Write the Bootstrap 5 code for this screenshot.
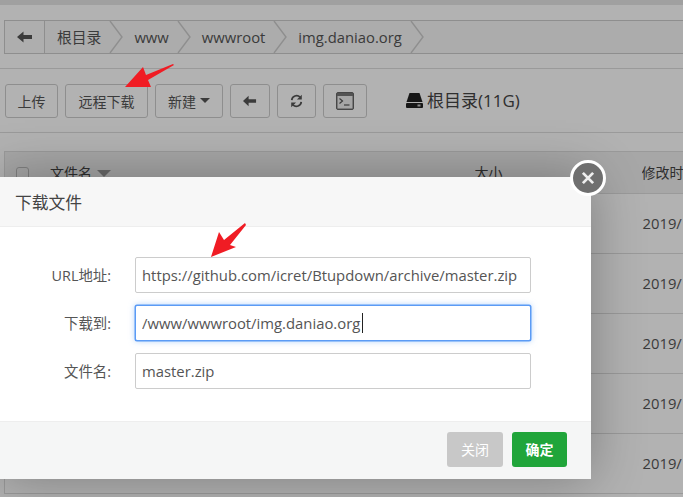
<!DOCTYPE html>
<html lang="zh">
<head>
<meta charset="utf-8">
<title>下载文件</title>
<link href="https://cdn.jsdelivr.net/npm/bootstrap@5.3.0/dist/css/bootstrap.min.css" rel="stylesheet">
<script src="https://cdn.jsdelivr.net/npm/bootstrap@5.3.0/dist/js/bootstrap.bundle.min.js"></script>
<style>
html,body{height:497px;overflow:hidden;}
body{background:#fff;font-family:"Open Sans","Noto Sans CJK SC",sans-serif;font-size:14px;color:#555;width:683px;position:relative;}
.topstrip{height:5px;background:#e6e6e6;}
.crumbbar{margin:15px 0 0 4px;height:34px;border:1px solid #ccc;border-right:0;background:#f6f6f6;}
.crumb-back{width:40px;border-right:1px solid #ccc;background:#fafafa;}
.crumb-text{color:#555;font-size:14.8px;line-height:32px;padding:0 8px 0 11px;white-space:nowrap;}
.crumb-first{padding-left:12px;}
.crumb-chev{width:14px;height:32px;flex:none;}
.toolrow{margin-top:14px;border-top:1px solid #ddd;padding:15px 0 15px 5px;height:65px;border-bottom:1px solid #ddd;gap:7px;}
.tool-btn{height:34px;padding:0 12px 0 12px;border:1px solid #ccc;border-radius:3px;background:#fff;color:#555;font-size:14px;display:flex;align-items:center;justify-content:center;white-space:nowrap;}
.tool-btn span.lbl{position:relative;top:1px;}
.w-up{width:53px}.w-rd{width:83px}.w-new{width:68px}.w-ic{width:40px}.w-ic2{width:39px}.w-tm{width:44px}
.caret-d{width:0;height:0;border:5px solid transparent;border-top-color:#555;border-bottom:0;margin-left:4px;}
.disk{margin-left:32px;font-size:17px;color:#444;gap:4px;}
.filetable{margin:18px 0 0 4px;width:679px;border-collapse:collapse;table-layout:fixed;border-top:1px solid #ddd;border-left:1px solid #ddd;}
.filetable th{font-weight:400;height:42px;border-bottom:1px solid #ddd;padding:0;color:#444;white-space:nowrap;overflow:hidden;background:#f0f0f0;}
.filetable td{height:60px;border-bottom:1px solid #ddd;padding:0;color:#555;font-size:14.8px;}
.filetable td.date-cell{padding-left:1px;}
.chk-box{width:13px;height:13px;border:1px solid #bbb;border-radius:3px;display:inline-block;margin:0 21px 0 11px;vertical-align:-2px;}
.sort-tri{width:0;height:0;border:7px solid transparent;border-top-color:#999;border-bottom:0;display:inline-block;margin-left:5px;vertical-align:1px;}
.row-link{margin-left:50px;display:inline-block;width:31px;height:31px;border-bottom:1px solid #20a;position:relative;top:-1px;}
.shade{position:absolute;inset:0;background:rgba(0,0,0,.3);}
.dlg{position:absolute;left:0;top:177px;width:591px;height:302px;background:#fff;display:flex;flex-direction:column;box-shadow:0 0 50px rgba(0,0,0,.3);}
.dlg-head{height:50px;background:#f7f7f7;border-bottom:1px solid #eee;padding:0 15px;line-height:51px;font-size:16.8px;color:#444;}
.dlg-body{flex:1;padding-top:30px;}
.dlg-row{height:36px;margin-bottom:12px;}
.dlg-label{width:111px;text-align:right;color:#555;font-size:14.4px;flex:none;padding-top:2px;margin:0;}
.dlg-input{margin-left:24px;width:396px;height:36px;border:1px solid #ccc;border-radius:2px;padding:0 6px;color:#555;font-size:14.85px;box-shadow:none;}
.dlg-input.on{border-color:#5b9bf5;box-shadow:0 0 0 .5px #5b9bf5,0 0 6px rgba(102,165,245,.55);}
.dlg-foot{height:58px;background:#f5f6f6;border-top:1px solid #eee;padding:10px 24px 0 0;gap:9px;}
.foot-btn{height:35px;border:0;border-radius:3px;color:#fff;font-size:14px;padding:0;}
.b-close{width:56px;background:#c8c8c8;}
.b-ok{width:55px;background:#20a53a;font-weight:600;}
.x-circle{position:absolute;left:570px;top:160px;width:36px;height:36px;border-radius:50%;background:#6f6f6f;border:3px solid #fff;}
.red-arrow{position:absolute;left:0;top:0;pointer-events:none;}
.txt-caret{position:absolute;left:362px;top:313px;width:1px;height:20px;background:#222;}
</style>
</head>
<body>
<div class="topstrip"></div>
<div class="crumbbar d-flex">
  <div class="crumb-back d-flex align-items-center justify-content-center">
    <svg width="16" height="12" viewBox="0 0 16 12"><path d="M0 6 6.5 .5V4H15V8H6.5V11.5Z" fill="#555"/></svg>
  </div>
  <span class="crumb-text crumb-first">根目录</span>
  <svg class="crumb-chev" viewBox="0 0 14 32"><polyline points="1,0 13,16 1,32" fill="none" stroke="#ccc" stroke-width="1.4"/></svg>
  <span class="crumb-text">www</span>
  <svg class="crumb-chev" viewBox="0 0 14 32"><polyline points="1,0 13,16 1,32" fill="none" stroke="#ccc" stroke-width="1.4"/></svg>
  <span class="crumb-text">wwwroot</span>
  <svg class="crumb-chev" viewBox="0 0 14 32"><polyline points="1,0 13,16 1,32" fill="none" stroke="#ccc" stroke-width="1.4"/></svg>
  <span class="crumb-text">img.daniao.org</span>
  <svg class="crumb-chev" viewBox="0 0 14 32"><polyline points="1,0 13,16 1,32" fill="none" stroke="#ccc" stroke-width="1.4"/></svg>
</div>
<div class="toolrow d-flex align-items-center">
  <button class="tool-btn w-up"><span class="lbl">上传</span></button>
  <button class="tool-btn w-rd"><span class="lbl">远程下载</span></button>
  <button class="tool-btn w-new"><span class="lbl">新建</span><span class="caret-d"></span></button>
  <button class="tool-btn w-ic"><svg width="15" height="12" viewBox="0 0 15 12"><path d="M0 6 6 .5V4H14V8H6V11.5Z" fill="#555"/></svg></button>
  <button class="tool-btn w-ic2"><svg width="15" height="16" viewBox="0 0 15 16"><path d="M2 7A5.6 5.6 0 0 1 11.6 3.6M13 9A5.6 5.6 0 0 1 3.4 12.4" fill="none" stroke="#555" stroke-width="2"/><path d="M13.6 .8V6.4H8ZM1.4 15.2V9.6H7Z" fill="#555"/></svg></button>
  <button class="tool-btn w-tm"><svg width="18" height="18" viewBox="0 0 18 18"><rect x=".5" y=".5" width="17" height="17" rx="1.5" fill="#777" stroke="#666"/><rect x="1.5" y="4" width="15" height="12.5" fill="#eee"/><path d="M3.5 6.5 6.5 9 3.5 11.5" fill="none" stroke="#555" stroke-width="1.2"/><path d="M8 13H13.5" stroke="#555" stroke-width="1.2"/></svg></button>
  <div class="disk d-flex align-items-center">
    <svg width="17" height="15" viewBox="0 0 17 15"><path d="M3.5 0H13.5L16.5 9H.5Z" fill="#222"/><rect y="10" width="17" height="5" rx="1" fill="#222"/><rect x="11.5" y="11.5" width="3" height="2" fill="#ccc"/></svg>
    <span>根目录(11G)</span>
  </div>
</div>
<table class="filetable">
  <colgroup><col style="width:470px"><col style="width:167px"><col></colgroup>
  <thead><tr><th><span class="chk-box"></span>文件名<span class="sort-tri"></span></th><th>大小</th><th>修改时</th></tr></thead>
  <tbody>
    <tr><td></td><td></td><td class="date-cell">2019/</td></tr>
    <tr><td></td><td></td><td class="date-cell">2019/</td></tr>
    <tr><td></td><td></td><td class="date-cell">2019/</td></tr>
    <tr><td></td><td></td><td class="date-cell">2019/</td></tr>
    <tr><td><span class="row-link"></span></td><td></td><td class="date-cell">2019/</td></tr>
  </tbody>
</table>
<div class="shade"></div>
<div class="dlg">
  <div class="dlg-head">下载文件</div>
  <div class="dlg-body">
    <div class="dlg-row d-flex align-items-center"><label class="dlg-label">URL地址:</label><input class="form-control dlg-input" value="https://github.com/icret/Btupdown/archive/master.zip"></div>
    <div class="dlg-row d-flex align-items-center"><label class="dlg-label">下载到:</label><input class="form-control dlg-input on" value="/www/wwwroot/img.daniao.org"></div>
    <div class="dlg-row d-flex align-items-center"><label class="dlg-label">文件名:</label><input class="form-control dlg-input" value="master.zip"></div>
  </div>
  <div class="dlg-foot d-flex justify-content-end">
    <button class="foot-btn b-close">关闭</button>
    <button class="foot-btn b-ok">确定</button>
  </div>
</div>
<span class="txt-caret"></span>
<div class="x-circle d-flex align-items-center justify-content-center">
  <svg width="14" height="14" viewBox="0 0 15 15"><path d="M2 2 13 13M13 2 2 13" stroke="#eee" stroke-width="3"/></svg>
</div>
<svg class="red-arrow" width="683" height="497" viewBox="0 0 683 497">
  <polygon points="125,87 143,67 146,75 173,64 174,65 148,80 151,87" fill="#f01c24"/>
  <polygon points="211,257 219,232 224,240 245,223 246,225 230,245 236,247" fill="#f01c24"/>
</svg>
</body>
</html>
